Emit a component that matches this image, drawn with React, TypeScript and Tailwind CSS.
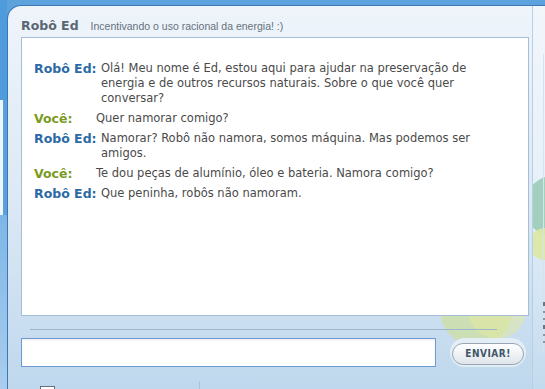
import React from 'react';

type Msg = { who: 'ed' | 'voce'; lines: string[] };

const messages: Msg[] = [
  {
    who: 'ed',
    lines: [
      'Olá! Meu nome é Ed, estou aqui para ajudar na preservação de',
      'energia e de outros recursos naturais. Sobre o que você quer',
      'conversar?',
    ],
  },
  { who: 'voce', lines: ['Quer namorar comigo?'] },
  { who: 'ed', lines: ['Namorar? Robô não namora, somos máquina. Mas podemos ser', 'amigos.'] },
  { who: 'voce', lines: ['Te dou peças de alumínio, óleo e bateria. Namora comigo?'] },
  { who: 'ed', lines: ['Que peninha, robôs não namoram.'] },
];

const ChatLine: React.FC<{ msg: Msg }> = ({ msg }) => {
  const isEd = msg.who === 'ed';
  return (
    <div className="flex items-start mb-[5px]">
      <span
        className={
          isEd
            ? 'w-[67px] shrink-0 font-bold text-[12.5px] leading-[15px] text-[#2b6aa6]'
            : 'w-[62px] shrink-0 font-bold text-[12.5px] leading-[15px] text-[#7a9a1e]'
        }
      >
        {isEd ? 'Robô Ed:' : 'Você:'}
      </span>
      <div className="text-[11.5px] leading-[15px] text-[#4a4a4a]">
        {msg.lines.map((l, i) => (
          <div key={i} className="whitespace-nowrap">{l}</div>
        ))}
      </div>
    </div>
  );
};

export default function App() {
  return (
    <div
      className="relative w-[545px] h-[389px] overflow-hidden bg-[#5ca3dd] flex"
      style={{ fontFamily: '"DejaVu Sans", Verdana, sans-serif' }}
    >
      {/* left page strip */}
      <div className="w-[7px] shrink-0 flex flex-col">
        <div className="h-[100px] bg-[#4f9bdb]" />
        <div className="h-[115px] flex">
          <div className="w-[3px] bg-[#eef5fb]" />
          <div className="flex-1 bg-[#5aa0dc]" />
        </div>
        <div className="flex-1 bg-gradient-to-b from-[#7db6e6] to-[#a9cdee]" />
      </div>

      {/* main panel */}
      <div className="flex-1 mt-[5px] rounded-tl-[14px] border-l border-t border-[#3b78b5] bg-gradient-to-b from-[#eef4fa] via-[#dde9f5] to-[#bfd8ed] flex relative">
        {/* decorative circles */}
        <div className="absolute left-[432px] top-[268px] w-[72px] h-[72px] rounded-full bg-[#cfe08c] opacity-60" />
        <div className="absolute left-[460px] top-[275px] w-[58px] h-[58px] rounded-full bg-[#e4ea9c] opacity-50" />

        <div className="w-[524px] shrink-0 flex flex-col relative">
          {/* header */}
          <div className="h-[31px] shrink-0 flex items-end pl-[13px] pb-[4px] gap-[12px]">
            <span className="font-bold text-[12.5px] leading-[15px] text-[#5b6673]">Robô Ed</span>
            <span
              className="text-[10.5px] leading-[14px] text-[#65717d]"
              style={{ fontFamily: '"Liberation Sans", Arial, sans-serif' }}
            >
              Incentivando o uso racional da energia! :)
            </span>
          </div>

          {/* chat box */}
          <div className="shrink-0 ml-[13px] w-[508px] h-[279px] bg-white border border-[#a5bdd6] pt-[23px] pl-[12px]">
            {messages.map((m, i) => (
              <ChatLine key={i} msg={m} />
            ))}
          </div>

          {/* separator */}
          <div className="shrink-0 ml-[22px] w-[467px] h-[1px] bg-[#9db6cd] mt-[13px]" />

          {/* input row */}
          <div className="shrink-0 flex items-center mt-[8px] ml-[13px]">
            <div className="w-[415px] h-[29px] bg-white border-[1.5px] border-[#6f9bd3] shadow-[inset_0_1px_2px_rgba(0,0,0,0.08)]" />
            <div className="ml-[14px] p-[2px] rounded-full bg-[#e3edf6]">
              <button
                className="w-[72px] h-[22px] rounded-full border border-[#98a6b3] bg-gradient-to-b from-white to-[#dfe5eb] text-[10px] font-bold tracking-[0.5px] text-[#3f5567]"
                style={{ fontFamily: '"DejaVu Sans Condensed", "DejaVu Sans", sans-serif' }}
              >
                ENVIAR!
              </button>
            </div>
          </div>

          {/* bottom checkbox, cut by the window edge */}
          <div className="absolute left-[32px] top-[380px] w-[15px] h-[15px] border border-[#5d6f80] bg-white" />
          <div className="absolute left-[191px] top-[375px] w-[1px] h-[20px] bg-[#a8c3da]" />
        </div>

        {/* right adjoining panel */}
        <div className="flex-1 border-l border-[#b8d0e6] bg-gradient-to-b from-[#f1f6fb] via-[#e6eff8] to-[#c3dbee] relative overflow-hidden">
          <div className="absolute left-[-6px] top-[170px] w-[50px] h-[60px] rounded-full bg-[#92c8ae] opacity-80" />
          <div className="absolute left-[-4px] top-[222px] w-[40px] h-[32px] rounded-full bg-[#dbe9a2] opacity-90" />
          <div className="absolute left-[10px] top-[48px] w-[1px] h-[300px] bg-[#d4e3f0]" />
          <div className="absolute left-[10px] top-[296px] flex flex-col gap-[5px]">
            <div className="w-[2px] h-[4px] bg-[#6a7580]" />
            <div className="w-[2px] h-[2px] bg-[#8a949e]" />
            <div className="w-[2px] h-[2px] bg-[#8a949e]" />
            <div className="w-[2px] h-[4px] bg-[#6a7580]" />
            <div className="w-[2px] h-[2px] bg-[#8a949e]" />
            <div className="w-[2px] h-[2px] bg-[#8a949e]" />
          </div>
        </div>
      </div>
    </div>
  );
}
